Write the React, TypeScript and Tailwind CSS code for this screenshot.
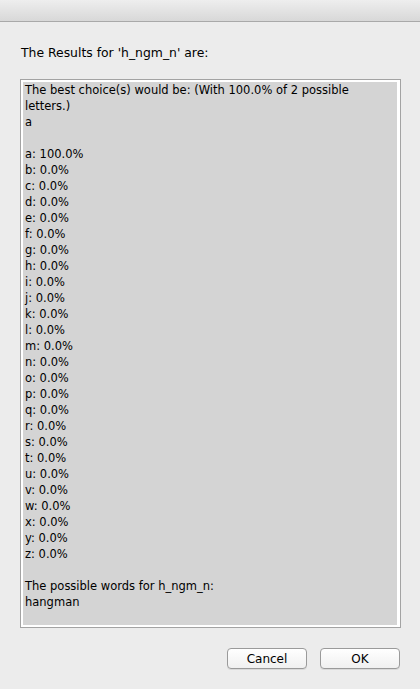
import React from "react";

const letters = "abcdefghijklmnopqrstuvwxyz".split("");

export default function App() {
  const lines: string[] = [
    "The best choice(s) would be: (With 100.0% of 2 possible",
    "letters.)",
    "a",
    "",
    ...letters.map((l) => (l === "a" ? "a: 100.0%" : `${l}: 0.0%`)),
    "",
    "The possible words for h_ngm_n:",
    "hangman",
  ];
  return (
    <div
      className="w-[420px] h-[689px] bg-[#ececec] flex flex-col text-black overflow-hidden"
      style={{ fontFamily: '"DejaVu Sans", "Liberation Sans", sans-serif' }}
    >
      <div className="h-[22px] shrink-0 bg-gradient-to-b from-[#eeeeee] to-[#d8d8d8] border-b border-[#a9a9a9]" />
      <div className="pl-[21px] pt-[23px] h-[57px] shrink-0 text-[12.4px] leading-[16px]">
        The Results for 'h_ngm_n' are:
      </div>
      <div className="ml-[20px] w-[381px] h-[549px] border border-[#a3a3a3] bg-white pl-[2px] pt-[2px] pr-[3px] pb-[2px] shrink-0">
        <div className="w-full h-full bg-[#d4d4d4] pl-[2px] text-[11.5px] leading-[16px]">
          {lines.map((t, i) => (
            <div key={i} className="h-[16px] whitespace-pre">
              {t}
            </div>
          ))}
        </div>
      </div>
      <div className="flex justify-end gap-[13px] pr-[20px] pt-[20px]">
        <button className="w-[80px] h-[21px] rounded-[4px] border border-[#9a9a9a] bg-gradient-to-b from-white to-[#f0f0f0] text-[12px] leading-[18px] shadow-[0_1px_0_rgba(0,0,0,0.08)]">
          Cancel
        </button>
        <button className="w-[80px] h-[21px] rounded-[4px] border border-[#9a9a9a] bg-gradient-to-b from-white to-[#f0f0f0] text-[12px] leading-[18px] shadow-[0_1px_0_rgba(0,0,0,0.08)]">
          OK
        </button>
      </div>
    </div>
  );
}
